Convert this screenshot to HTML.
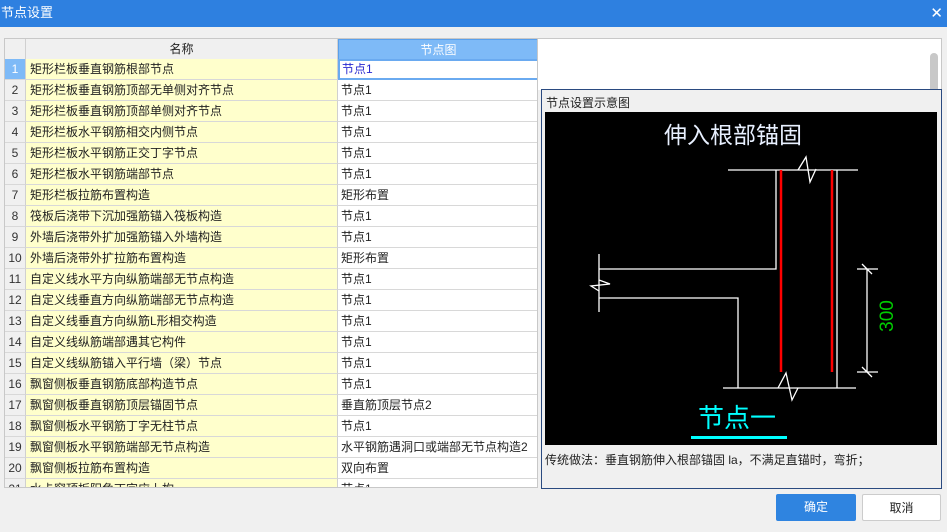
<!DOCTYPE html>
<html><head><meta charset="utf-8"><style>
*{margin:0;padding:0;box-sizing:border-box}
body{width:947px;height:532px;background:#f0f0f0;font-family:"Liberation Sans","Noto Sans CJK SC",sans-serif;font-size:12px;color:#222;position:relative;overflow:hidden}
.title{position:absolute;left:0;top:0;width:947px;height:27px;background:#2e80e0;color:#fff;font-size:13px;line-height:26px;padding-left:1px}
.x{position:absolute;right:4px;top:6px;color:#fff;font-size:15px;line-height:15px}
.tbl{position:absolute;left:4px;top:38px;width:534px;height:450px;overflow:hidden;border:1px solid #c8c8c8;background:#fff}
.row{position:absolute;left:0;height:21px;width:534px;line-height:20px}
.c0{position:absolute;left:0;width:21px;height:21px;background:#f0f0f0;border-right:1px solid #d0d0d0;border-bottom:1px solid #d8d8d8;text-align:center;color:#333}
.c1{position:absolute;left:21px;width:312px;height:21px;background:#ffffcc;border-right:1px solid #d0d0d0;border-bottom:1px solid #d8d8d8;padding-left:4px}
.c2{position:absolute;left:333px;width:201px;height:21px;background:#fff;border-bottom:1px solid #d8d8d8;padding-left:3px}
.hdr .c1{background:#f0f0f0;text-align:center;padding:0}
.hdr .c2{background:#7ebaf7;color:#fff;text-align:center;padding:0;border:1px solid #5aa0ec}
.sel .c0{background:#7ebaf7;color:#fff}
.sel .c2{border:2px solid #6aaaf0;color:#2a2ad0;line-height:17px;padding-left:2px}
.white{position:absolute;left:538px;top:38px;width:404px;height:52px;background:#fff;border:1px solid #c8c8c8;border-left:none;border-bottom:none}
.thumb{position:absolute;left:930px;top:53px;width:8px;height:38px;background:#c8c8c8;border-radius:4px 4px 0 0}
.panel{position:absolute;left:541px;top:89px;width:401px;height:400px;border:1px solid #2a4a80;background:#f0f0f0}
.btn{position:absolute;top:494px;height:27px;width:80px;text-align:center;line-height:26px;font-size:12px}
</style></head><body>
<div class="title">节点设置<span class="x">✕</span></div>
<div class="white"></div>
<div class="thumb"></div>
<div class="tbl">
<div class="row hdr" style="top:0"><div class="c0"></div><div class="c1">名称</div><div class="c2">节点图</div></div>
<div class="row sel" style="top:20px"><div class="c0">1</div><div class="c1">矩形栏板垂直钢筋根部节点</div><div class="c2">节点1</div></div>
<div class="row" style="top:41px"><div class="c0">2</div><div class="c1">矩形栏板垂直钢筋顶部无单侧对齐节点</div><div class="c2">节点1</div></div>
<div class="row" style="top:62px"><div class="c0">3</div><div class="c1">矩形栏板垂直钢筋顶部单侧对齐节点</div><div class="c2">节点1</div></div>
<div class="row" style="top:83px"><div class="c0">4</div><div class="c1">矩形栏板水平钢筋相交内侧节点</div><div class="c2">节点1</div></div>
<div class="row" style="top:104px"><div class="c0">5</div><div class="c1">矩形栏板水平钢筋正交丁字节点</div><div class="c2">节点1</div></div>
<div class="row" style="top:125px"><div class="c0">6</div><div class="c1">矩形栏板水平钢筋端部节点</div><div class="c2">节点1</div></div>
<div class="row" style="top:146px"><div class="c0">7</div><div class="c1">矩形栏板拉筋布置构造</div><div class="c2">矩形布置</div></div>
<div class="row" style="top:167px"><div class="c0">8</div><div class="c1">筏板后浇带下沉加强筋锚入筏板构造</div><div class="c2">节点1</div></div>
<div class="row" style="top:188px"><div class="c0">9</div><div class="c1">外墙后浇带外扩加强筋锚入外墙构造</div><div class="c2">节点1</div></div>
<div class="row" style="top:209px"><div class="c0">10</div><div class="c1">外墙后浇带外扩拉筋布置构造</div><div class="c2">矩形布置</div></div>
<div class="row" style="top:230px"><div class="c0">11</div><div class="c1">自定义线水平方向纵筋端部无节点构造</div><div class="c2">节点1</div></div>
<div class="row" style="top:251px"><div class="c0">12</div><div class="c1">自定义线垂直方向纵筋端部无节点构造</div><div class="c2">节点1</div></div>
<div class="row" style="top:272px"><div class="c0">13</div><div class="c1">自定义线垂直方向纵筋L形相交构造</div><div class="c2">节点1</div></div>
<div class="row" style="top:293px"><div class="c0">14</div><div class="c1">自定义线纵筋端部遇其它构件</div><div class="c2">节点1</div></div>
<div class="row" style="top:314px"><div class="c0">15</div><div class="c1">自定义线纵筋锚入平行墙（梁）节点</div><div class="c2">节点1</div></div>
<div class="row" style="top:335px"><div class="c0">16</div><div class="c1">飘窗侧板垂直钢筋底部构造节点</div><div class="c2">节点1</div></div>
<div class="row" style="top:356px"><div class="c0">17</div><div class="c1">飘窗侧板垂直钢筋顶层锚固节点</div><div class="c2">垂直筋顶层节点2</div></div>
<div class="row" style="top:377px"><div class="c0">18</div><div class="c1">飘窗侧板水平钢筋丁字无柱节点</div><div class="c2">节点1</div></div>
<div class="row" style="top:398px"><div class="c0">19</div><div class="c1">飘窗侧板水平钢筋端部无节点构造</div><div class="c2">水平钢筋遇洞口或端部无节点构造2</div></div>
<div class="row" style="top:419px"><div class="c0">20</div><div class="c1">飘窗侧板拉筋布置构造</div><div class="c2">双向布置</div></div>
<div class="row" style="top:440px"><div class="c0">21</div><div class="c1">水卡窗顶板阳角丁字应上构</div><div class="c2">节点1</div></div>
</div>
<div class="panel">
<div style="position:absolute;left:4px;top:4px;font-size:12px">节点设置示意图</div>
<div style="position:absolute;left:3px;top:361px;font-size:12px">传统做法：垂直钢筋伸入根部锚固 la，不满足直锚时，弯折；</div>
</div>
<svg style="position:absolute;left:0;top:0" width="947" height="532">
<rect x="545" y="112" width="392" height="333" fill="#000"/>
<text x="733" y="143" font-size="23" fill="#e8f0ff" text-anchor="middle" font-family="Noto Sans CJK SC,sans-serif">伸入根部锚固</text>
<g stroke="#fff" stroke-width="1.3" fill="none">
<path d="M728 170H858M776 170V269H599M837 170V388M599 298H738V388M723 388H856M599 254V312"/>
<path d="M798 170L806 157L810 182L816 169"/>
<path d="M778 388L786 373L792 400L798 388"/>
<path d="M599 280L610 284L591 286L599 291"/>
<path d="M867 269V372M857 269H878M857 372H878M862 264L872 274M862 367L872 377"/>
</g>
<g stroke="#f00" stroke-width="2.5"><path d="M781 170V372M832 170V372"/></g>
<text transform="translate(893 316) rotate(-90)" font-size="19" fill="#0c0" text-anchor="middle" font-family="Liberation Sans,sans-serif">300</text>
<text x="737" y="427" font-size="26" fill="#0ff" text-anchor="middle" font-family="Noto Sans CJK SC,sans-serif">节点一</text>
<rect x="691" y="436" width="96" height="3" fill="#0ff"/>
</svg>
<div class="btn" style="left:776px;background:#2f84e0;color:#fff;border-radius:2px">确定</div>
<div class="btn" style="left:862px;width:79px;background:#fff;border:1px solid #ccc;border-radius:2px">取消</div>
</body></html>
